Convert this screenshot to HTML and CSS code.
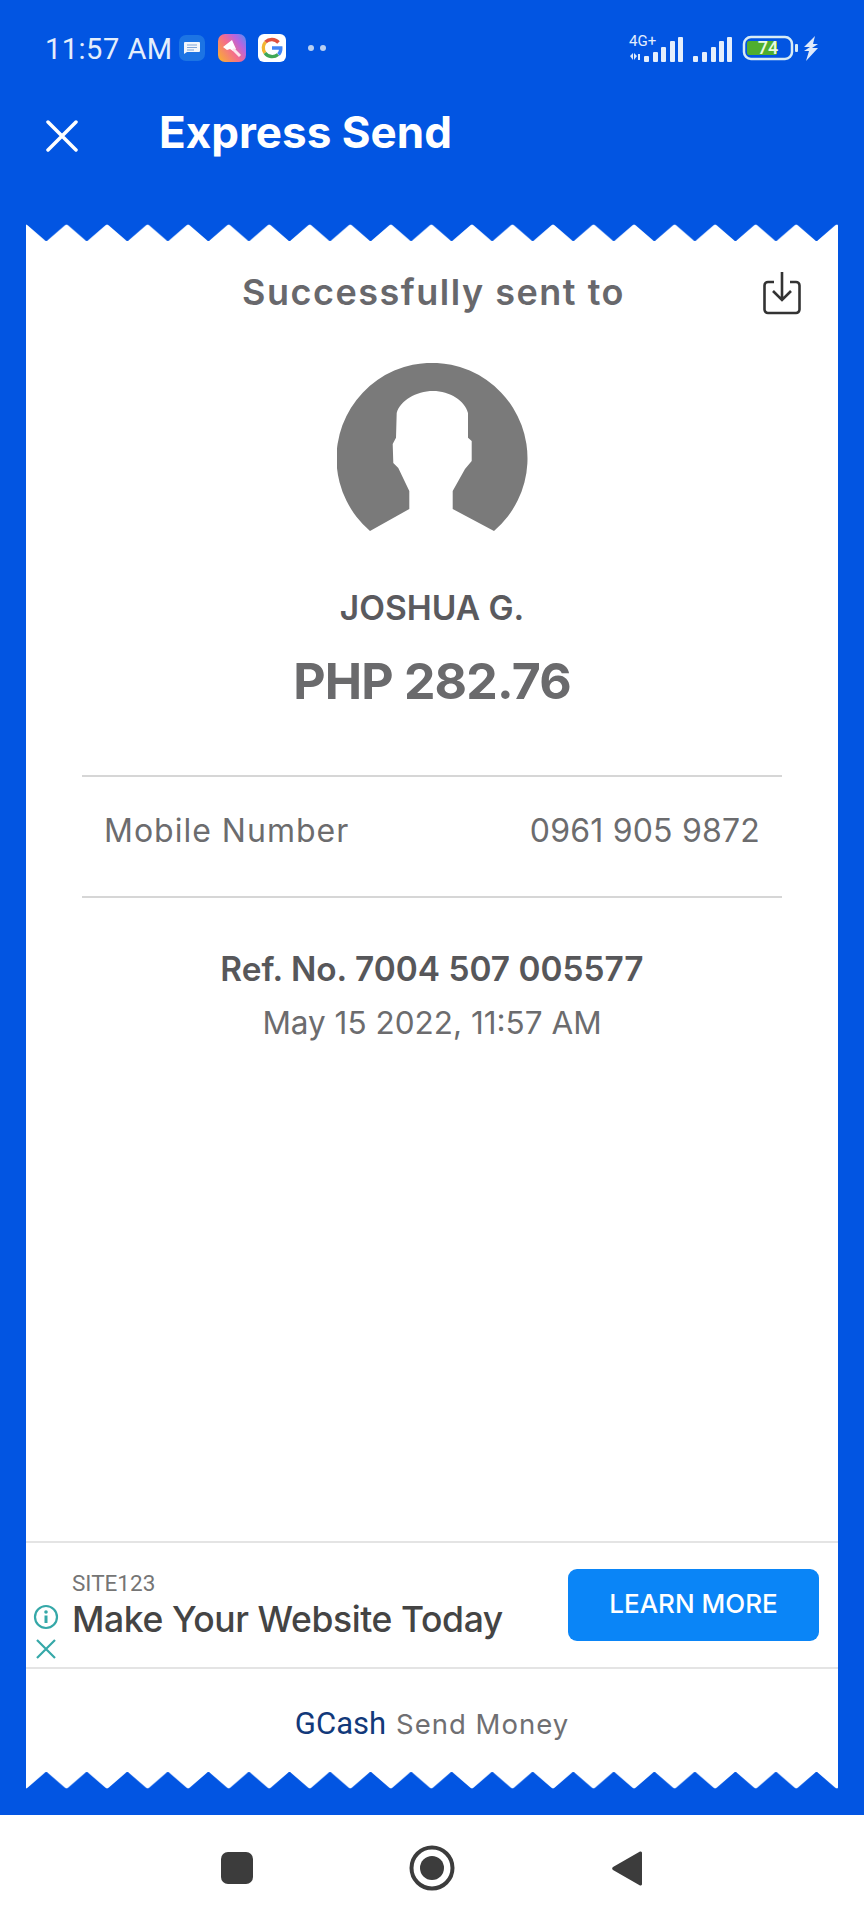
FILE: index.html
```html
<!DOCTYPE html>
<html lang="en">
<head>
  <meta charset="UTF-8" />
  <title>Express Send</title>
  <meta name="viewport" content="width=device-width, initial-scale=1.0" />
  <link rel="stylesheet" href="styles.css">
</head>
<body>
  <div class="status-bar">
    <span class="time">11:57 AM</span>
    <svg class="app-icon msg-icon" viewBox="0 0 26 26">
      <rect width="26" height="26" rx="7" fill="#1c74e4"/>
      <path d="M6 7h14a1 1 0 0 1 1 1v8a1 1 0 0 1-1 1H8l-3 2V8a1 1 0 0 1 1-1z" fill="#f2f6fb"/>
      <path d="M8 10h10M8 12.5h10M8 15h7" stroke="#7fa6d8" stroke-width="1"/>
    </svg>
    <svg class="app-icon paint-icon" viewBox="0 0 28 28">
      <defs>
        <linearGradient id="paintGrad" x1="0" y1="0.8" x2="1" y2="0.1">
          <stop offset="0" stop-color="#f8a93a"/>
          <stop offset="0.45" stop-color="#f46c8e"/>
          <stop offset="0.75" stop-color="#b765e0"/>
          <stop offset="1" stop-color="#5f8bf0"/>
        </linearGradient>
      </defs>
      <rect width="28" height="28" rx="7" fill="url(#paintGrad)"/>
      <path d="M5 13l9-7 4 9-3 2-3-2-3 1z" fill="#fff"/>
      <path d="M15 15l7 7" stroke="#fbe6ea" stroke-width="3"/>
    </svg>
    <svg class="app-icon g-icon" viewBox="0 0 28 28">
      <rect width="28" height="28" rx="6" fill="#fff"/>
      <path d="M20.5 8.5A9 9 0 0 0 7.5 8" stroke="#e0523f" stroke-width="3.4" fill="none"/>
      <path d="M7.5 8A9 9 0 0 0 7 19" stroke="#f2b632" stroke-width="3.4" fill="none"/>
      <path d="M7 19a9 9 0 0 0 13 1.5" stroke="#3fa757" stroke-width="3.4" fill="none"/>
      <path d="M20.5 20.5a9 9 0 0 0 2.3-6.5H14" stroke="#4285f4" stroke-width="3.4" fill="none"/>
    </svg>
    <span class="status-dots"><i></i><i></i></span>
    <svg class="signal-icons" viewBox="0 -6 200 36">
      <text x="3" y="12" class="net-label">4G+</text>
      <path d="M4 22l3-3v7zM8 19l3 3-3 4zM12 20h2v6h-2z" fill="#dfeafb"/>
      <g fill="#e4eefc">
        <rect x="18" y="22" width="5" height="6" rx="1"/>
        <rect x="27" y="18" width="5" height="10" rx="1"/>
        <rect x="35" y="13" width="5" height="15" rx="1"/>
        <rect x="44" y="7" width="5" height="21" rx="1"/>
        <rect x="52" y="3" width="5" height="25" rx="1"/>
        <rect x="67" y="22" width="5" height="6" rx="1"/>
        <rect x="76" y="18" width="5" height="10" rx="1"/>
        <rect x="85" y="13" width="5" height="15" rx="1"/>
        <rect x="93" y="7" width="5" height="21" rx="1"/>
        <rect x="101" y="3" width="5" height="25" rx="1"/>
      </g>
      <rect x="118" y="3" width="48" height="22" rx="7" fill="none" stroke="#d8ecf5" stroke-width="2.5"/>
      <rect x="121" y="7" width="30" height="14" rx="2" fill="#4fae2e"/>
      <text x="142" y="20" text-anchor="middle" class="batt-label">74</text>
      <rect x="169" y="10" width="3" height="8" rx="1" fill="#d8ecf5"/>
      <path d="M189 2L178 13h6l-6 4h5l-3 10 12-13h-6l6-4h-5z" fill="#dfeafb"/>
    </svg>
  </div>

  <div class="app-bar">
    <svg class="close-icon" viewBox="0 0 32 32">
      <path d="M2 2l28 28M30 2L2 30" stroke="#fff" stroke-width="3.5" stroke-linecap="round"/>
    </svg>
    <h1>Express Send</h1>
  </div>

  <div class="receipt">
    <svg class="teeth" height="18" width="812">
      <defs>
        <pattern id="tooth" width="40.54" height="18" patternUnits="userSpaceOnUse">
          <path d="M0 .4L1.5 1.2 18.8 16.2Q20.27 18 21.7 16.2L39 1.2 40.54 .4V18H0z" fill="#fff"/>
        </pattern>
      </defs>
      <rect width="812" height="18" fill="url(#tooth)"/>
    </svg>

    <div class="receipt-body">
      <div class="sent-row">
        <span></span>
        <h2>Successfully sent to</h2>
        <svg class="save-icon" viewBox="0 0 38 44">
          <path d="M11 11H5a3.5 3.5 0 0 0-3.5 3.5v24A3.5 3.5 0 0 0 5 42h28a3.5 3.5 0 0 0 3.5-3.5v-24A3.5 3.5 0 0 0 33 11h-6" fill="none" stroke="#333" stroke-width="2.6"/>
          <path d="M19 1v27M10 20l9 9 9-9" fill="none" stroke="#333" stroke-width="2.6"/>
        </svg>
      </div>

      <svg class="avatar" viewBox="37 22 192 172">
        <path d="M70 190A95.5 95.5 0 1 1 194 190L152.7 168V150L165 128 171.7 120V100L168 96.7V72C165 60 150 50 133 50S100 60 96.7 72L96 96.7 92.7 103 93.3 122 98.3 127 109.3 150V168z" fill="#7a7a7a"/>
      </svg>

      <div class="name">JOSHUA G.</div>
      <div class="amount">PHP 282.76</div>

      <div class="detail-row">
        <span>Mobile Number</span>
        <span class="detail-value">0961 905 9872</span>
      </div>

      <div class="ref-no">Ref. No. 7004 507 005577</div>
      <div class="sent-date">May 15 2022, 11:57 AM</div>

      <div class="ad">
        <div class="ad-marks">
          <svg viewBox="0 0 26 26">
            <circle cx="13" cy="13" r="11" fill="none" stroke="#35a8a8" stroke-width="2.2"/>
            <circle cx="13" cy="8" r="1.8" fill="#35a8a8"/>
            <path d="M13 11.5V19" stroke="#35a8a8" stroke-width="3"/>
          </svg>
          <svg viewBox="0 0 22 22">
            <path d="M2 2l18 18M20 2L2 20" stroke="#35a8a8" stroke-width="2.2"/>
          </svg>
        </div>
        <div class="ad-copy">
          <div class="ad-brand">SITE123</div>
          <div class="ad-title">Make Your Website Today</div>
        </div>
        <div class="ad-btn">LEARN MORE</div>
      </div>

      <div class="footer-brand">
        <span class="gcash">GCash</span>
        <span class="send-money">Send Money</span>
      </div>
    </div>

    <svg class="teeth flip" height="18" width="812">
      <rect width="812" height="18" fill="url(#tooth)"/>
    </svg>
  </div>

  <div class="nav-bar">
    <div class="nav-square"></div>
    <svg class="nav-home" viewBox="0 0 48 48">
      <circle cx="24" cy="24" r="20.5" fill="none" stroke="#3c3c3c" stroke-width="4"/>
      <circle cx="24" cy="24" r="12" fill="#3c3c3c"/>
    </svg>
    <svg class="nav-back" viewBox="0 0 30 37">
      <path d="M28 1.5a1.5 1.5 0 0 1 2 1.5v31a1.5 1.5 0 0 1-2 1.5L1 20a2 2 0 0 1 0-3z" fill="#3c3c3c"/>
    </svg>
  </div>
</body>
</html>
```

FILE: styles.css
```css
* {
  box-sizing: border-box;
  margin: 0;
  padding: 0;
}

body {
  width: 864px;
  height: 1920px;
  display: flex;
  flex-direction: column;
  background-color: #0255e2;
  font-family: "Inter", "Roboto", sans-serif;
  overflow: hidden;
}

/* status bar */
.status-bar {
  height: 96px;
  padding: 32px 0 0 45px;
  display: flex;
  align-items: flex-start;
  color: #e4eefc;
}

.time {
  font-family: "Roboto", sans-serif;
  font-size: 29px;
  line-height: 34px;
  width: 134px;
  letter-spacing: 0.5px;
}

.app-icon {
  width: 28px;
  height: 28px;
  margin-top: 2px;
}

.msg-icon {
  width: 26px;
  height: 26px;
  margin-top: 3px;
}

.paint-icon {
  margin-left: 13px;
}

.g-icon {
  margin-left: 12px;
}

.status-dots {
  display: flex;
  gap: 6px;
  margin: 13px 0 0 22px;
}

.status-dots i {
  width: 6px;
  height: 6px;
  border-radius: 50%;
  background-color: #b9cff2;
}

.signal-icons {
  width: 200px;
  height: 36px;
  margin: -4px 0 0 300px;
}

.net-label {
  font-family: "Roboto", sans-serif;
  font-size: 15px;
  fill: #e4eefc;
}

.batt-label {
  font-family: "Roboto", sans-serif;
  font-size: 18px;
  font-weight: 500;
  fill: #eafbe0;
}

/* app bar */
.app-bar {
  height: 128px;
  display: flex;
  align-items: flex-start;
  padding-left: 46px;
}

.close-icon {
  width: 32px;
  height: 32px;
  margin-top: 24px;
}

.app-bar h1 {
  margin: 10px 0 0 81px;
  color: white;
  font-size: 44px;
  line-height: 52px;
  font-weight: 700;
}

/* receipt */
.receipt {
  width: 812px;
  height: 1565px;
  margin-left: 26px;
  display: flex;
  flex-direction: column;
}

.teeth {
  display: block;
  flex: none;
}

.teeth.flip {
  transform: scaleY(-1);
}

.receipt-body {
  flex: 1;
  background-color: white;
  display: flex;
  flex-direction: column;
  align-items: center;
}

.sent-row {
  width: 100%;
  display: grid;
  grid-template-columns: 1fr auto 1fr;
  padding-top: 28px;
}

.sent-row h2 {
  margin-left: 3px;
  color: #68686c;
  font-size: 36px;
  line-height: 44px;
  font-weight: 600;
  letter-spacing: 1.5px;
}

.save-icon {
  width: 38px;
  height: 44px;
  justify-self: end;
  margin: 1px 37px 0 0;
}

.avatar {
  width: 192px;
  height: 172px;
  margin: 48px 0 0 2px;
}

.name {
  margin-top: 53px;
  color: #5a5a5e;
  font-size: 33.5px;
  line-height: 40px;
  font-weight: 600;
}

.amount {
  margin-top: 22px;
  color: #6a6a6c;
  font-size: 50px;
  line-height: 62px;
  font-weight: 700;
  letter-spacing: -0.8px;
}

.detail-row {
  width: 700px;
  height: 123px;
  margin-top: 63px;
  padding: 0 22px 12px;
  border-top: 2px solid #d6d6d6;
  border-bottom: 2px solid #d6d6d6;
  display: flex;
  justify-content: space-between;
  align-items: center;
  color: #6c6c6e;
  font-size: 32px;
  letter-spacing: 1px;
}

.detail-value {
  letter-spacing: 0.2px;
}

.ref-no {
  margin-top: 50px;
  color: #57575a;
  font-size: 33.4px;
  line-height: 42px;
  font-weight: 600;
}

.sent-date {
  margin-top: 12px;
  color: #6c6c6e;
  font-size: 31.5px;
  line-height: 42px;
}

/* ad banner */
.ad {
  width: 100%;
  height: 128px;
  margin-top: auto;
  border-top: 2px solid #e4e4e4;
  border-bottom: 2px solid #e4e4e4;
  display: flex;
  align-items: flex-start;
}

.ad-marks {
  width: 46px;
  padding: 61px 0 0 7px;
  display: flex;
  flex-direction: column;
  gap: 8px;
}

.ad-marks svg {
  width: 26px;
  height: 26px;
}

.ad-marks svg + svg {
  width: 22px;
  height: 22px;
  margin-left: 2px;
}

.ad-copy {
  flex: 1;
}

.ad-brand {
  margin-top: 26px;
  color: #757575;
  font-family: "Roboto", sans-serif;
  font-size: 22.5px;
  line-height: 28px;
}

.ad-title {
  color: #444;
  font-size: 35.5px;
  line-height: 46px;
  font-weight: 500;
  letter-spacing: -0.4px;
}

.ad-btn {
  width: 251px;
  height: 72px;
  margin: 26px 19px 0 0;
  border-radius: 9px;
  background-color: #0a85f7;
  color: white;
  font-size: 26px;
  font-weight: 500;
  line-height: 70px;
  text-align: center;
}

.footer-brand {
  height: 102px;
  padding-top: 36px;
  display: flex;
  align-items: baseline;
  gap: 10px;
}

.gcash {
  color: #12397a;
  font-family: "Roboto", sans-serif;
  font-size: 31px;
}

.send-money {
  color: #6f6f72;
  font-size: 27.5px;
  letter-spacing: 1px;
}

/* bottom nav */
.nav-bar {
  height: 105px;
  margin-top: auto;
  background-color: white;
  display: flex;
  align-items: flex-start;
  padding: 32px 0 0 221px;
}

.nav-square {
  width: 32px;
  height: 32px;
  margin-top: 5px;
  border-radius: 7px;
  background-color: #3c3c3c;
}

.nav-home {
  width: 48px;
  height: 48px;
  margin-left: 155px;
  margin-top: -3px;
}

.nav-back {
  width: 30px;
  height: 37px;
  margin-left: 156px;
  margin-top: 3px;
}
```
